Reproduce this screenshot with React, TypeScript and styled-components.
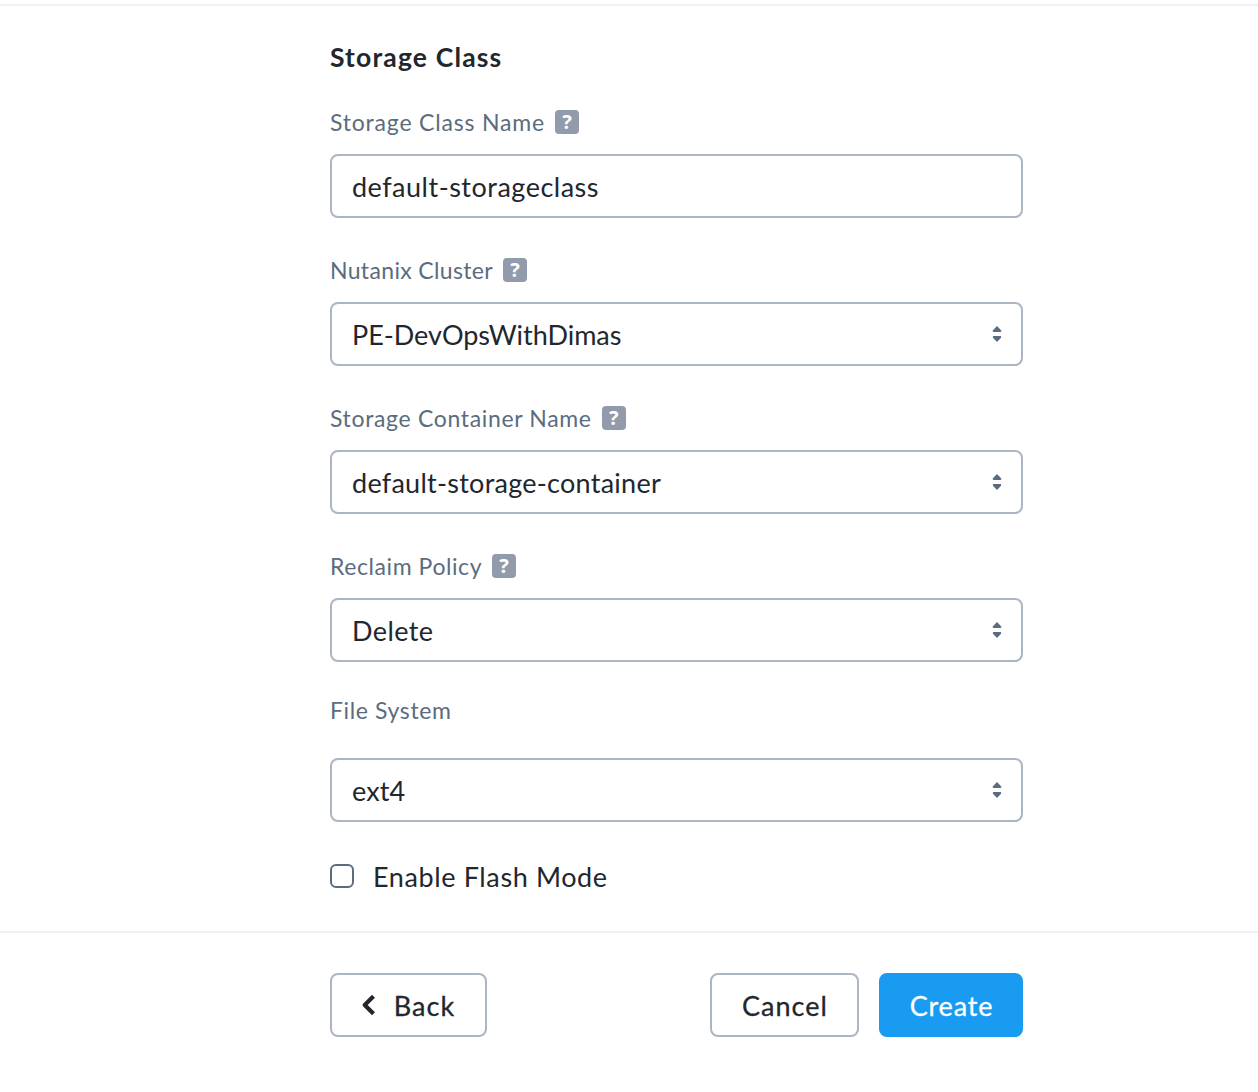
import React, { useState } from "react";
import styled, { createGlobalStyle } from "styled-components";

const ink = "#22272e";
const slate = "#5a6c7e";
const line = "#acb5c2";

const GlobalStyle = createGlobalStyle`
  *, *::before, *::after { box-sizing: border-box; }
  body {
    margin: 0;
    background: #fff;
    color: ${ink};
    font-family: Lato, "Open Sans", sans-serif;
  }
`;

const Page = styled.div`
  display: flex;
  flex-direction: column;
  height: 1092px;
  padding-top: 4px;
  overflow: hidden;
`;

const Body = styled.main`
  height: 927px;
  padding: 35px 235px 0 330px;
  border-top: 2px solid #f0f1f1;
`;

const Footer = styled.footer`
  display: flex;
  gap: 20px;
  padding: 40px 235px 0 330px;
  border-top: 2px solid #f0f1f1;
`;

const Text = styled.span<{ $tracking: number }>`
  letter-spacing: ${(p) => p.$tracking}px;
  white-space: nowrap;
`;

const Title = styled.h1`
  margin: 0 0 37px;
  font-size: 26.5px;
  font-weight: 700;
  line-height: 32px;
`;

const Field = styled.div<{ $gap: number; $after: number }>`
  display: flex;
  flex-direction: column;
  gap: ${(p) => p.$gap}px;
  margin-bottom: ${(p) => p.$after}px;
`;

const Label = styled.div<{ $helpGap: number }>`
  display: flex;
  align-items: center;
  gap: ${(p) => p.$helpGap}px;
  height: 24px;
  color: ${slate};
  font-size: 23px;
  line-height: 24px;
`;

const Help = styled.span`
  display: flex;
  align-items: center;
  justify-content: center;
  width: 24px;
  height: 24px;
  border-radius: 4px;
  background: #919bab;
  color: #fff;
  font: 700 20px/24px "Open Sans", sans-serif;
`;

const Control = styled.div`
  display: flex;
  align-items: center;
  justify-content: space-between;
  height: 64px;
  padding: 2px 19px 0 20px;
  border: 2px solid ${line};
  border-radius: 8px;
  font-size: 27px;
  line-height: 32px;
`;

const Arrows = styled.svg`
  width: 10px;
  height: 16px;
  margin-top: -2px;
  fill: ${slate};
`;

const CheckRow = styled.div`
  display: flex;
  align-items: center;
  gap: 19px;
  height: 24px;
  font-size: 27px;
  line-height: 26px;
`;

const Box = styled.button<{ $on: boolean }>`
  width: 24px;
  height: 24px;
  padding: 0;
  border: 2px solid ${slate};
  border-radius: 6px;
  background: ${(p) => (p.$on ? slate : "#fff")};
`;

const CheckText = styled.label`
  padding-top: 2px;
`;

const Button = styled.button<{ $width: number; $primary?: boolean; $push?: boolean }>`
  display: flex;
  align-items: center;
  justify-content: center;
  width: ${(p) => p.$width}px;
  height: 64px;
  margin-right: ${(p) => (p.$push ? "auto" : 0)};
  padding: 2px 0 0 1px;
  border: 2px solid ${(p) => (p.$primary ? "#1a9bf2" : line)};
  border-radius: 8px;
  background: ${(p) => (p.$primary ? "#1a9bf2" : "#fff")};
  color: ${(p) => (p.$primary ? "#fff" : ink)};
  font: 400 27px/32px Lato, "Open Sans", sans-serif;
  -webkit-text-stroke: 0.3px currentColor;
`;

const Chevron = styled.svg`
  flex-shrink: 0;
  width: 14px;
  height: 22px;
  margin: -3px 19px 0 -2px;
  fill: none;
  stroke: ${ink};
  stroke-width: 4.2;
`;

interface FieldData {
  label: string;
  labelTracking: number;
  helpGap?: number;
  value: string;
  valueTracking: number;
  select: boolean;
  gap: number;
  after: number;
}

const fields: FieldData[] = [
  { label: "Storage Class Name", labelTracking: 0.81, helpGap: 10, value: "default-storageclass", valueTracking: 0.5, select: false, gap: 20, after: 40 },
  { label: "Nutanix Cluster", labelTracking: 0.34, helpGap: 10, value: "PE-DevOpsWithDimas", valueTracking: -0.02, select: true, gap: 20, after: 40 },
  { label: "Storage Container Name", labelTracking: 0.66, helpGap: 10, value: "default-storage-container", valueTracking: 0.26, select: true, gap: 20, after: 40 },
  { label: "Reclaim Policy", labelTracking: 0.58, helpGap: 10, value: "Delete", valueTracking: 0.4, select: true, gap: 20, after: 36 },
  { label: "File System", labelTracking: 0.62, value: "ext4", valueTracking: 0.1, select: true, gap: 36, after: 42 },
];

export default function App() {
  const [flash, setFlash] = useState(false);
  return (
    <Page>
      <GlobalStyle />
      <Body>
        <Title>
          <Text $tracking={1.16}>Storage Class</Text>
        </Title>
        {fields.map((f) => (
          <Field key={f.label} $gap={f.gap} $after={f.after}>
            <Label $helpGap={f.helpGap ?? 0}>
              <Text $tracking={f.labelTracking}>{f.label}</Text>
              {f.helpGap && <Help>?</Help>}
            </Label>
            <Control>
              <Text $tracking={f.valueTracking}>{f.value}</Text>
              {f.select && (
                <Arrows viewBox="0 0 10 16">
                  <path d="M4.2.7Q5 0 5.8.7L9 4.3Q9.6 6 8.5 6H1.5Q.4 6 1 4.3Z" />
                  <path d="M4.2 15.3Q5 16 5.8 15.3L9 11.7Q9.6 10 8.5 10H1.5Q.4 10 1 11.7Z" />
                </Arrows>
              )}
            </Control>
          </Field>
        ))}
        <CheckRow>
          <Box $on={flash} role="checkbox" aria-checked={flash} onClick={() => setFlash(!flash)} />
          <CheckText>
            <Text $tracking={0.62}>Enable Flash Mode</Text>
          </CheckText>
        </CheckRow>
      </Body>
      <Footer>
        <Button $width={157} $push>
          <Chevron viewBox="0 0 14 22">
            <path d="M12.5 2.2 3.7 11l8.8 8.8" strokeLinejoin="round" />
          </Chevron>
          <Text $tracking={1}>Back</Text>
        </Button>
        <Button $width={149}>
          <Text $tracking={1.05}>Cancel</Text>
        </Button>
        <Button $width={144} $primary>
          <Text $tracking={0.85}>Create</Text>
        </Button>
      </Footer>
    </Page>
  );
}
